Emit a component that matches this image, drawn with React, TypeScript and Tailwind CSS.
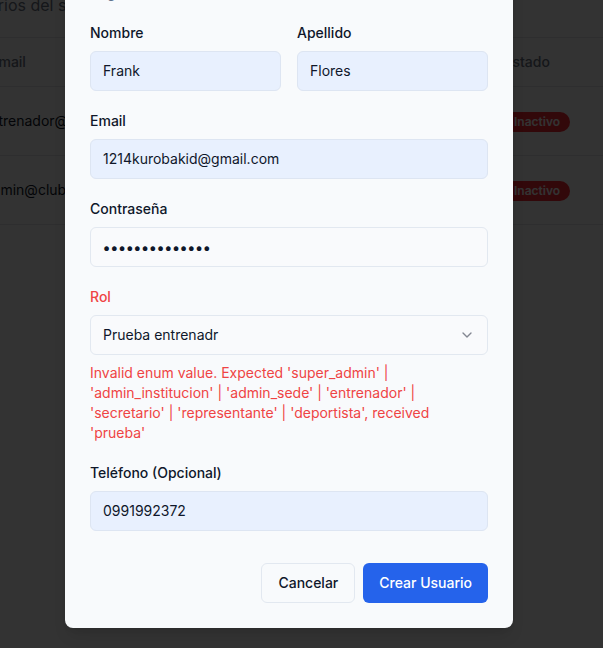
import React from "react";
import { ChevronDown } from "lucide-react";

function Field({
  label,
  children,
  error,
}: {
  label: string;
  children: React.ReactNode;
  error?: boolean;
}) {
  return (
    <div className="flex flex-col">
      <label
        className={`text-sm leading-5 font-medium mb-2 ${
          error ? "text-[#ef4444]" : "text-[#0f172a]"
        }`}
      >
        {label}
      </label>
      {children}
    </div>
  );
}

function FilledInput({ value }: { value: string }) {
  return (
    <div className="h-10 w-full rounded-md border border-[#dde5f2] bg-[#e8f0fe] px-3 flex items-center text-sm text-[#0f172a]">
      {value}
    </div>
  );
}

export default function App() {
  return (
    <div className="relative h-[648px] w-full overflow-hidden bg-white font-['Inter',sans-serif]">
      {/* background page */}
      <div className="-mt-[7px] -ml-[10px] w-[640px]">
        <p className="h-[44px] text-base leading-6 text-gray-500">
          <span className="-ml-[31px]">Usuarios del sistema</span>
        </p>
        <div className="border-t border-gray-200">
          <div className="flex h-[49px] items-center border-b border-gray-200 text-sm font-medium text-gray-500">
            <div className="w-[514px]">Email</div>
            <div>Estado</div>
          </div>
          <div className="flex h-[69px] items-center border-b border-gray-200 text-sm text-gray-900">
            <div className="w-[514px]">
              <span className="-ml-[8px]">entrenador@club.com</span>
            </div>
            <div>
              <span className="inline-flex rounded-full bg-red-500 px-2.5 py-0.5 text-xs leading-4 font-semibold text-white">
                Inactivo
              </span>
            </div>
          </div>
          <div className="flex h-[69px] items-center border-b border-gray-200 text-sm text-gray-900">
            <div className="w-[514px]">
              <span className="-ml-[6px]">admin@club.com</span>
            </div>
            <div>
              <span className="inline-flex rounded-full bg-red-500 px-2.5 py-0.5 text-xs leading-4 font-semibold text-white">
                Inactivo
              </span>
            </div>
          </div>
        </div>
      </div>

      {/* overlay */}
      <div className="absolute inset-0 bg-black/80" />

      {/* modal */}
      <div className="absolute left-[65px] bottom-[20px] w-[448px] rounded-lg bg-[#f8fafc] px-[25px] pt-6 pb-[25px] shadow-lg">
        <div className="flex flex-col gap-1.5">
          <h2 className="text-lg font-semibold leading-none text-[#0f172a]">
            Crear Nuevo Usuario
          </h2>
          <p className="text-sm leading-5 text-slate-500">Registra un nuevo usuario</p>
        </div>

        <div className="mt-[20px] flex flex-col gap-5">
          <div className="grid grid-cols-2 gap-4">
            <Field label="Nombre">
              <FilledInput value="Frank" />
            </Field>
            <Field label="Apellido">
              <FilledInput value="Flores" />
            </Field>
          </div>
          <Field label="Email">
            <FilledInput value="1214kurobakid@gmail.com" />
          </Field>
          <Field label="Contraseña">
            <div className="h-10 w-full rounded-md border border-[#e2e8f0] bg-[#f9fafc] px-3 flex items-center">
              <span className="text-[15px] font-bold tracking-[0.6px] text-[#0f172a] leading-none">
                ••••••••••••••
              </span>
            </div>
          </Field>
          <div className="flex flex-col">
            <label className="text-sm leading-5 font-medium mb-2 text-[#ef4444]">Rol</label>
            <div className="h-10 w-full rounded-md border border-[#e2e8f0] bg-[#f9fafc] px-3 flex items-center justify-between text-sm text-[#0f172a]">
              <span>Prueba entrenadr</span>
              <ChevronDown className="h-4 w-4 opacity-50" />
            </div>
            <p className="mt-2 text-sm leading-5 text-[#ef4444]">
              Invalid enum value. Expected 'super_admin' | 'admin_institucion' | 'admin_sede' |
              'entrenador' | 'secretario' | 'representante' | 'deportista', received 'prueba'
            </p>
          </div>
          <Field label="Teléfono (Opcional)">
            <FilledInput value="0991992372" />
          </Field>
        </div>

        <div className="mt-8 flex justify-end gap-2">
          <button className="h-10 rounded-md border border-[#e2e8f0] bg-[#f8fafc] px-4 text-sm font-medium text-[#0f172a]">
            Cancelar
          </button>
          <button className="h-10 rounded-md bg-[#2563eb] px-4 text-sm font-medium text-white">
            Crear Usuario
          </button>
        </div>
      </div>
    </div>
  );
}
